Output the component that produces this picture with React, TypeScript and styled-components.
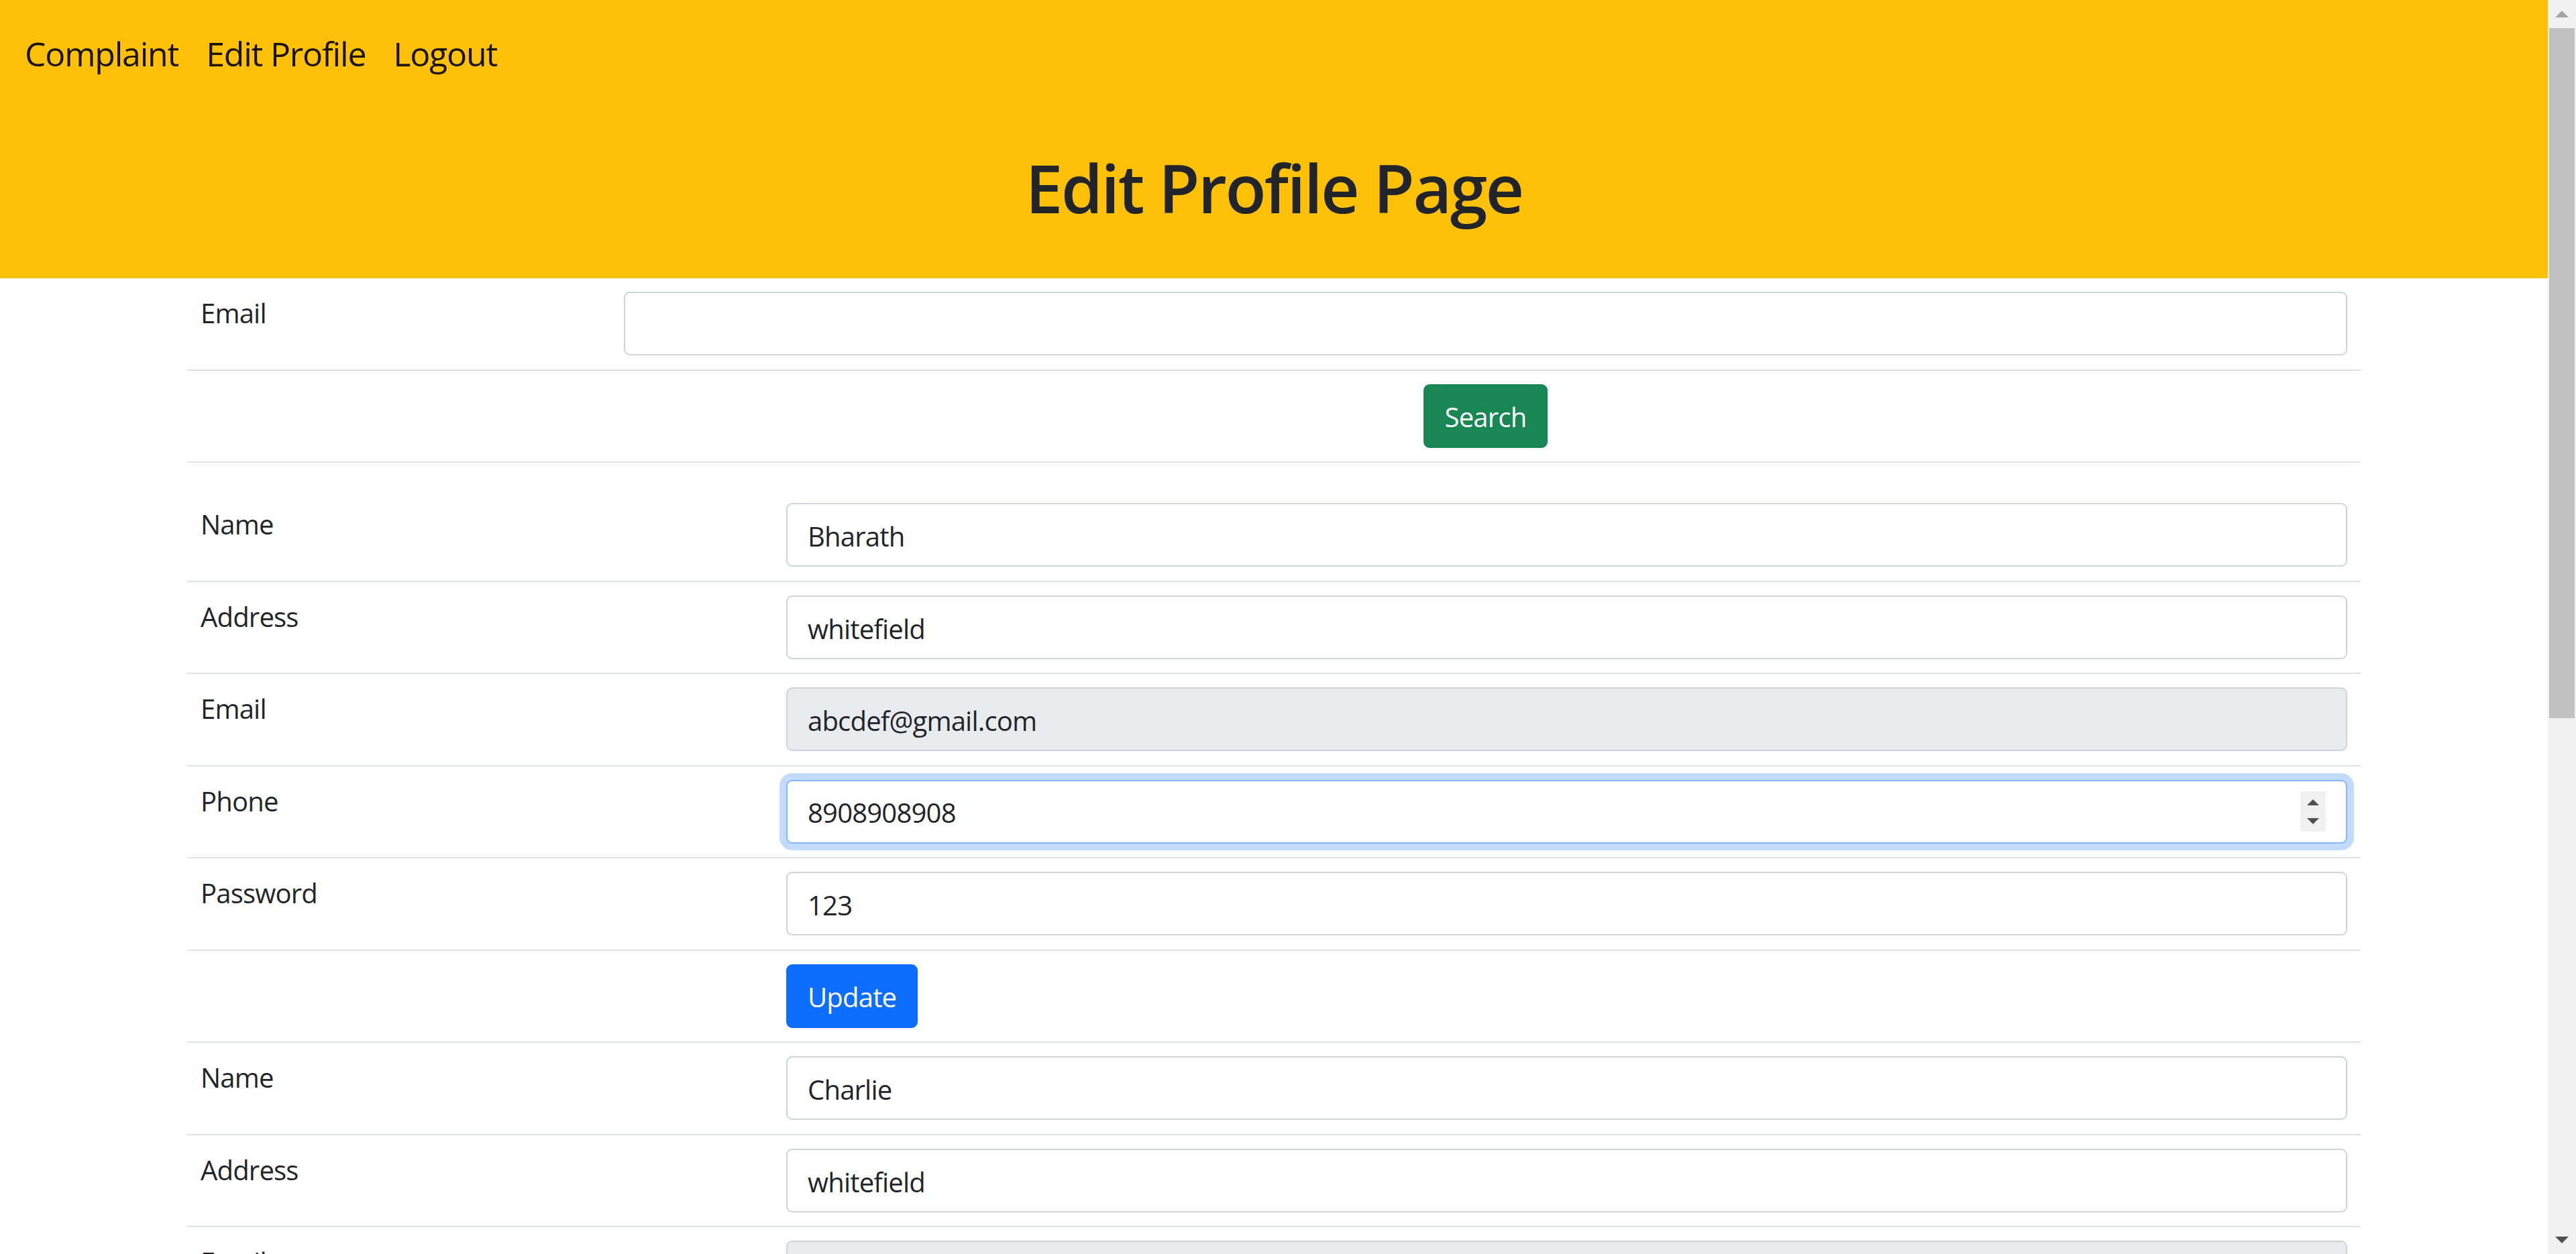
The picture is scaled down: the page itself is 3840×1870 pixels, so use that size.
import React from "react";
import styled, { createGlobalStyle } from "styled-components";

const GlobalStyle = createGlobalStyle`
  html, body {
    margin: 0;
    padding: 0;
    height: 100%;
    overflow: hidden;
    background: #ffffff;
  }
  body {
    font-family: "Open Sans", "Noto Sans", "Liberation Sans", sans-serif;
    font-size: 40px;
    line-height: 1.5;
    letter-spacing: -0.8px;
    color: #212529;
  }
  #root { height: 100%; }
  * { box-sizing: border-box; }
`;

const Page = styled.div`
  display: flex;
  height: 100vh;
  width: 100%;
`;

const Main = styled.main`
  flex: 1;
  min-width: 0;
  overflow: hidden;
`;

const Header = styled.header`
  background: #ffc107;
  height: 415px;
  display: flex;
  flex-direction: column;
`;

const Navbar = styled.nav`
  display: flex;
  align-items: center;
  gap: 41px;
  padding: 43px 37px 0;
`;

const NavLink = styled.a`
  font-size: 50px;
  line-height: 75px;
  letter-spacing: -1.2px;
  color: rgba(0, 0, 0, 0.9);
  text-decoration: none;
  white-space: nowrap;
`;

const Title = styled.h1`
  margin: 101px 0 0;
  text-align: center;
  font-size: 100px;
  line-height: 120px;
  font-weight: 600;
  letter-spacing: -2.6px;
  color: #212529;
`;

const Container = styled.div`
  max-width: 3300px;
  margin: 0 auto;
  padding: 0 30px;
`;

const Table = styled.div`
  width: 100%;
  margin-bottom: 40px;
`;

const Row = styled.div`
  display: flex;
  border-bottom: 2px solid #dee2e6;
`;

const LabelCell = styled.div<{ $width: number }>`
  flex: 0 0 ${(p) => p.$width}px;
  padding: 22px 20px 18px;
  line-height: 60px;
`;

const ValueCell = styled.div<{ $center?: boolean }>`
  flex: 1;
  min-width: 0;
  padding: 20px 20px 20.5px;
  display: flex;
  justify-content: ${(p) => (p.$center ? "center" : "flex-start")};
`;

const Input = styled.input<{ $disabled?: boolean }>`
  display: block;
  width: 100%;
  height: 95px;
  padding: 17px 30px 13px;
  font-family: inherit;
  font-size: 40px;
  line-height: 60px;
  letter-spacing: inherit;
  color: #212529;
  background: ${(p) => (p.$disabled ? "#e9ecef" : "#ffffff")};
  border: 2px solid #ced4da;
  border-radius: 9px;
  outline: none;
`;

const FocusedBox = styled.div`
  display: flex;
  align-items: center;
  width: 100%;
  height: 95px;
  padding: 0 30px;
  background: #ffffff;
  border: 2px solid #86b7fe;
  border-radius: 9px;
  box-shadow: 0 0 0 10px rgba(13, 110, 253, 0.25);
`;

const BareInput = styled.input`
  flex: 1;
  min-width: 0;
  border: none;
  outline: none;
  padding: 4px 0 0;
  font-family: inherit;
  font-size: 40px;
  line-height: 60px;
  letter-spacing: inherit;
  color: #212529;
  background: transparent;
`;

const Spinner = styled.div`
  flex: 0 0 38px;
  height: 60px;
  background: #f0f0f0;
  display: flex;
  flex-direction: column;
  align-items: center;
  justify-content: center;
  gap: 19px;
`;

const Button = styled.button<{ $variant: "success" | "primary" }>`
  font-family: inherit;
  font-size: 40px;
  line-height: 60px;
  letter-spacing: inherit;
  padding: 17px 30px 13px;
  height: 95px;
  color: #ffffff;
  background: ${(p) => (p.$variant === "success" ? "#198754" : "#0d6efd")};
  border: 2px solid ${(p) => (p.$variant === "success" ? "#198754" : "#0d6efd")};
  border-radius: 9px;
  cursor: pointer;
`;

const ScrollTrack = styled.div`
  flex: 0 0 42px;
  background: #f1f1f1;
  display: flex;
  flex-direction: column;
  height: 100vh;
`;

const ScrollArrow = styled.div`
  height: 42px;
  display: flex;
  align-items: center;
  justify-content: center;
`;

const ScrollThumb = styled.div`
  height: 1029px;
  margin: 0 2px;
  background: #c1c1c1;
`;

const ScrollRest = styled.div`
  flex: 1;
`;

const Triangle = ({ dir, color, w, h }: { dir: "up" | "down"; color: string; w: number; h: number }) => (
  <svg width={w} height={h} viewBox={`0 0 ${w} ${h}`}>
    {dir === "up" ? (
      <polygon points={`0,${h} ${w / 2},0 ${w},${h}`} fill={color} />
    ) : (
      <polygon points={`0,0 ${w},0 ${w / 2},${h}`} fill={color} />
    )}
  </svg>
);

type User = { name: string; address: string; email: string; phone: string; password: string };

const users: User[] = [
  { name: "Bharath", address: "whitefield", email: "abcdef@gmail.com", phone: "8908908908", password: "123" },
  { name: "Charlie", address: "whitefield", email: "charlie@gmail.com", phone: "9876543210", password: "456" },
];

const LABEL1 = 631;
const LABEL2 = 873;

export default function App() {
  return (
    <>
      <GlobalStyle />
      <Page>
        <Main>
          <Header>
            <Navbar>
              <NavLink href="#">Complaint</NavLink>
              <NavLink href="#">Edit Profile</NavLink>
              <NavLink href="#">Logout</NavLink>
            </Navbar>
            <Title>Edit Profile Page</Title>
          </Header>
          <Container>
            <Table>
              <Row>
                <LabelCell $width={LABEL1}>Email</LabelCell>
                <ValueCell>
                  <Input type="email" defaultValue="" />
                </ValueCell>
              </Row>
              <Row>
                <LabelCell $width={LABEL1} />
                <ValueCell $center>
                  <Button $variant="success">Search</Button>
                </ValueCell>
              </Row>
            </Table>
            <Table>
              {users.map((u, i) => (
                <React.Fragment key={u.name}>
                  <Row>
                    <LabelCell $width={LABEL2}>Name</LabelCell>
                    <ValueCell>
                      <Input defaultValue={u.name} />
                    </ValueCell>
                  </Row>
                  <Row>
                    <LabelCell $width={LABEL2}>Address</LabelCell>
                    <ValueCell>
                      <Input defaultValue={u.address} />
                    </ValueCell>
                  </Row>
                  <Row>
                    <LabelCell $width={LABEL2}>Email</LabelCell>
                    <ValueCell>
                      <Input $disabled readOnly value={u.email} />
                    </ValueCell>
                  </Row>
                  <Row>
                    <LabelCell $width={LABEL2}>Phone</LabelCell>
                    <ValueCell>
                      {i === 0 ? (
                        <FocusedBox>
                          <BareInput defaultValue={u.phone} />
                          <Spinner>
                            <Triangle dir="up" color="#505050" w={18} h={9} />
                            <Triangle dir="down" color="#505050" w={18} h={9} />
                          </Spinner>
                        </FocusedBox>
                      ) : (
                        <Input defaultValue={u.phone} />
                      )}
                    </ValueCell>
                  </Row>
                  <Row>
                    <LabelCell $width={LABEL2}>Password</LabelCell>
                    <ValueCell>
                      <Input defaultValue={u.password} />
                    </ValueCell>
                  </Row>
                  <Row>
                    <LabelCell $width={LABEL2} />
                    <ValueCell>
                      <Button $variant="primary">Update</Button>
                    </ValueCell>
                  </Row>
                </React.Fragment>
              ))}
            </Table>
          </Container>
        </Main>
        <ScrollTrack>
          <ScrollArrow>
            <Triangle dir="up" color="#a3a3a3" w={20} h={10} />
          </ScrollArrow>
          <ScrollThumb />
          <ScrollRest />
          <ScrollArrow>
            <Triangle dir="down" color="#505050" w={20} h={10} />
          </ScrollArrow>
        </ScrollTrack>
      </Page>
    </>
  );
}
